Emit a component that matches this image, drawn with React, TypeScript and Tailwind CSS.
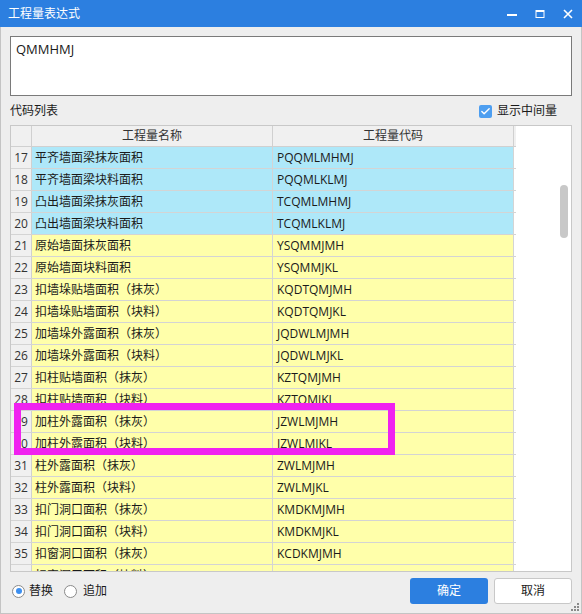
import { Check } from 'lucide-react';

type Row = { no: number; name: string; code: string; cyan?: boolean };

const rows: Row[] = [
  { no: 17, name: '平齐墙面梁抹灰面积', code: 'PQQMLMHMJ', cyan: true },
  { no: 18, name: '平齐墙面梁块料面积', code: 'PQQMLKLMJ', cyan: true },
  { no: 19, name: '凸出墙面梁抹灰面积', code: 'TCQMLMHMJ', cyan: true },
  { no: 20, name: '凸出墙面梁块料面积', code: 'TCQMLKLMJ', cyan: true },
  { no: 21, name: '原始墙面抹灰面积', code: 'YSQMMJMH' },
  { no: 22, name: '原始墙面块料面积', code: 'YSQMMJKL' },
  { no: 23, name: '扣墙垛贴墙面积（抹灰）', code: 'KQDTQMJMH' },
  { no: 24, name: '扣墙垛贴墙面积（块料）', code: 'KQDTQMJKL' },
  { no: 25, name: '加墙垛外露面积（抹灰）', code: 'JQDWLMJMH' },
  { no: 26, name: '加墙垛外露面积（块料）', code: 'JQDWLMJKL' },
  { no: 27, name: '扣柱贴墙面积（抹灰）', code: 'KZTQMJMH' },
  { no: 28, name: '扣柱贴墙面积（块料）', code: 'KZTQMJKL' },
  { no: 29, name: '加柱外露面积（抹灰）', code: 'JZWLMJMH' },
  { no: 30, name: '加柱外露面积（块料）', code: 'JZWLMJKL' },
  { no: 31, name: '柱外露面积（抹灰）', code: 'ZWLMJMH' },
  { no: 32, name: '柱外露面积（块料）', code: 'ZWLMJKL' },
  { no: 33, name: '扣门洞口面积（抹灰）', code: 'KMDKMJMH' },
  { no: 34, name: '扣门洞口面积（块料）', code: 'KMDKMJKL' },
  { no: 35, name: '扣窗洞口面积（抹灰）', code: 'KCDKMJMH' },
  { no: 36, name: '扣窗洞口面积（块料）', code: 'KCDKMJKL' },
];

function TitleButtons() {
  return (
    <div className="ml-auto flex h-full">
      <div className="flex w-[28px] items-center justify-center">
        <svg width="10" height="10" viewBox="0 0 10 10">
          <rect x="0" y="5" width="10" height="2" fill="#fff" />
        </svg>
      </div>
      <div className="flex w-[28px] items-center justify-center">
        <svg width="10" height="10" viewBox="0 0 10 10">
          <rect x="1" y="1.5" width="8" height="7" fill="none" stroke="#fff" strokeWidth="1" />
          <rect x="1" y="1" width="8" height="2" fill="#fff" />
        </svg>
      </div>
      <div className="flex w-[28px] items-center justify-center">
        <svg width="10" height="10" viewBox="0 0 10 10">
          <path d="M1 1 L9 9 M9 1 L1 9" stroke="#fff" strokeWidth="1.6" />
        </svg>
      </div>
    </div>
  );
}

export default function App() {
  return (
    <div className="relative flex h-[614px] w-[582px] flex-col font-['Open_Sans','Noto_Sans_CJK_SC',sans-serif] text-[12px] text-[#1a1a1a]">
      <div className="flex h-[27px] shrink-0 items-center bg-[#2c7fe0] pl-[8px] text-white">
        <span className="leading-none">工程量表达式</span>
        <TitleButtons />
      </div>

      <div className="flex flex-1 flex-col border-x border-b border-[#c4c4c4] bg-[#eeeeee] px-[9px] pt-[9px] pb-[9px]">
        <div className="h-[60px] border border-[#7a7a7a] bg-white pl-[5px] pt-[3px] text-[13px] leading-[18px]">
          QMMHMJ
        </div>

        <div className="flex h-[29px] items-center pr-[15px] pt-[1px]">
          <span>代码列表</span>
          <label className="ml-auto flex items-center gap-[5px]">
            <span className="flex h-[13px] w-[13px] items-center justify-center rounded-[2px] bg-[#4d9ef0]">
              <Check size={11} strokeWidth={3} color="#fff" />
            </span>
            <span>显示中间量</span>
          </label>
        </div>

        <div className="relative flex h-[447px] border border-[#c8c8c8] bg-white">
          <div className="flex w-[505px] flex-col overflow-hidden">
            <div className="flex h-[21px] shrink-0 border-b border-[#d0d0d0] bg-[#f0f0f0] text-[#333]">
              <div className="w-[21px] border-r border-[#d0d0d0]" />
              <div className="flex w-[241px] items-center justify-center border-r border-[#d0d0d0]">工程量名称</div>
              <div className="flex w-[241px] items-center justify-center border-r border-[#d0d0d0]">工程量代码</div>
            </div>
            {rows.map((r) => (
              <div key={r.no} className="flex h-[22px] shrink-0 border-b border-[#d4d4d4]">
                <div className="flex w-[21px] items-center justify-center border-r border-[#d0d0d0] bg-[#f0f0f0] text-[#333]">
                  {r.no}
                </div>
                <div
                  className={`flex w-[241px] items-center border-r border-[#d4d4d4] pl-[3px] ${
                    r.cyan ? 'bg-[#aee8f9]' : 'bg-[#ffffaa]'
                  }`}
                >
                  {r.name}
                </div>
                <div
                  className={`flex w-[241px] items-center border-r border-[#d4d4d4] pl-[4px] ${
                    r.cyan ? 'bg-[#aee8f9]' : 'bg-[#ffffaa]'
                  }`}
                >
                  {r.code}
                </div>
              </div>
            ))}
          </div>
          <div className="absolute left-[549px] top-[59px] h-[53px] w-[8px] rounded-full bg-[#c8c8c8]" />
        </div>

        <div className="mt-[6px] flex h-[26px] items-center">
          <label className="ml-[2px] flex items-center gap-[4px]">
            <span className="flex h-[13px] w-[13px] items-center justify-center rounded-full border border-[#8a8a8a] bg-white">
              <span className="h-[6px] w-[6px] rounded-full bg-[#3c8ff0]" />
            </span>
            <span>替换</span>
          </label>
          <label className="ml-[11px] flex items-center gap-[6px]">
            <span className="h-[13px] w-[13px] rounded-full border border-[#8a8a8a] bg-white" />
            <span>追加</span>
          </label>
          <button className="ml-auto flex h-[26px] w-[78px] items-center justify-center rounded-[3px] bg-[#2c7fe0] text-white">
            确定
          </button>
          <button className="ml-[6px] flex h-[26px] w-[78px] items-center justify-center rounded-[3px] border border-[#c8c8c8] bg-white">
            取消
          </button>
        </div>
      </div>

      <div className="pointer-events-none absolute left-[14px] top-[403px] h-[52px] w-[381px] border-[7px] border-[#f022f0]" />

      <svg className="absolute right-[3px] bottom-[3px]" width="8" height="8" viewBox="0 0 8 8">
        <rect x="6" y="0" width="2" height="2" fill="#8a8a8a" />
        <rect x="3" y="3" width="2" height="2" fill="#8a8a8a" />
        <rect x="6" y="3" width="2" height="2" fill="#8a8a8a" />
        <rect x="0" y="6" width="2" height="2" fill="#8a8a8a" />
        <rect x="3" y="6" width="2" height="2" fill="#8a8a8a" />
        <rect x="6" y="6" width="2" height="2" fill="#8a8a8a" />
      </svg>
    </div>
  );
}
